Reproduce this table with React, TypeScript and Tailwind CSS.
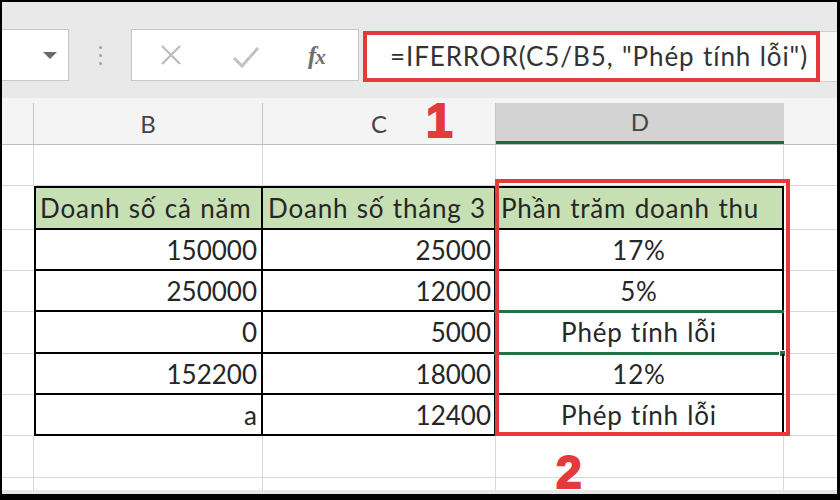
import React from "react";

const rows = [
  { b: "150000", c: "25000", d: "17%", h: "h-[41px]" },
  { b: "250000", c: "12000", d: "5%", h: "h-[41px]" },
  { b: "0", c: "5000", d: "Phép tính lỗi", h: "h-[42px]", selected: true },
  { b: "152200", c: "18000", d: "12%", h: "h-[41px]" },
  { b: "a", c: "12400", d: "Phép tính lỗi", h: "h-[41px]" },
];

function EmptyRow({ h, last }: { h: string; last?: boolean }) {
  const line = last ? "" : "border-b border-[#d9d9d9]";
  return (
    <div className={`flex ${h} shrink-0`}>
      <div className={`w-[32px] border-r border-[#d9d9d9] ${line}`} />
      <div className={`w-[229px] border-r border-[#d9d9d9] ${line}`} />
      <div className={`w-[233px] border-r border-[#d9d9d9] ${line}`} />
      <div className={`w-[288px] border-r border-[#d9d9d9] ${line}`} />
      <div className={`flex-1 ${line}`} />
    </div>
  );
}

export default function App() {
  return (
    <div className="w-[840px] h-[500px] bg-black border-l-2 border-t-2 border-r-[3px] border-b-[6px] border-black font-['Lato','Noto_Sans',sans-serif] text-[#262626]">
      <div className="relative w-full h-full bg-white flex flex-col">
        {/* formula bar */}
        <div className="h-[96px] shrink-0 bg-[#e9e9e9] flex items-start pt-[27px]">
          <div className="w-[67px] h-[52px] bg-white border border-l-0 border-[#c8c8c8] flex items-center justify-end pr-[11px]">
            <div className="w-0 h-0 border-l-[7px] border-r-[7px] border-t-[7px] border-l-transparent border-r-transparent border-t-[#6b6b6b]" />
          </div>
          <div className="ml-[29px] w-[4px] h-[52px] flex flex-col items-center justify-center gap-[5px]">
            <span className="w-[3px] h-[3px] rounded-full bg-[#a3a3a3]" />
            <span className="w-[3px] h-[3px] rounded-full bg-[#a3a3a3]" />
            <span className="w-[3px] h-[3px] rounded-full bg-[#a3a3a3]" />
          </div>
          <div className="ml-[29px] w-[228px] h-[52px] bg-white border border-[#c8c8c8] flex items-center">
            <svg className="ml-[28px]" width="22" height="22" viewBox="0 0 22 22">
              <path d="M2 2 L20 20 M20 2 L2 20" stroke="#b9b9b9" strokeWidth="2" fill="none" />
            </svg>
            <svg className="ml-[50px] mt-[3px]" width="28" height="24" viewBox="0 0 28 24">
              <path d="M2 13 L10 21 L26 3" stroke="#c2c2c2" strokeWidth="3" fill="none" />
            </svg>
            <span className="ml-[48px] font-['Liberation_Serif',serif] italic font-bold text-[25px] text-[#6e6e6e] leading-none tracking-[-1px]">
              f<span className="text-[21px]">x</span>
            </span>
          </div>
          <div className="ml-[4px] mt-[2px] w-[457px] h-[51px] bg-white border-4 border-[#e53a3d] flex items-center pl-[23px] text-[26px] text-[#333] whitespace-nowrap tracking-[0.9px] [word-spacing:1px]">
            =IFERROR(C5/B5, "Phép tính lỗi")
          </div>
          <div className="flex-1 mt-[2px] h-[51px] bg-[#f7f7f7] border-y border-[#d0d0d0]" />
        </div>

        {/* column headers */}
        <div className="h-[47px] shrink-0 bg-[#f4f4f4] pt-[5px] flex border-b border-[#bdbdbd] text-[24px] text-[#444]">
          <div className="w-[32px] border-r border-[#c4c4c4]" />
          <div className="w-[229px] border-r border-[#c4c4c4] flex items-center justify-center">B</div>
          <div className="w-[233px] border-r border-[#c4c4c4] flex items-center justify-center">C</div>
          <div className="w-[288px] bg-[#d3d3d3] border-b-[3px] border-[#1e6b41] flex items-center justify-center text-[#3b4a40]">D</div>
          <div className="flex-1" />
        </div>

        {/* sheet */}
        <div className="flex flex-col text-[26px]">
          <EmptyRow h="h-[41px]" />

          <div className="flex h-[44px] shrink-0 tracking-[0.8px] [word-spacing:1px]">
            <div className="w-[32px] border-b border-[#d9d9d9]" />
            <div className="w-[229px] bg-[#c6e0b4] border-2 border-black flex items-center pl-[4px] pt-[1px] whitespace-nowrap">Doanh số cả năm</div>
            <div className="w-[233px] bg-[#c6e0b4] border-y-2 border-r-2 border-black flex items-center pl-[5px] pt-[1px] whitespace-nowrap">Doanh số tháng 3</div>
            <div className="w-[288px] bg-[#c6e0b4] border-y-2 border-r-2 border-black flex items-center pl-[5px] pt-[1px] whitespace-nowrap">Phần trăm doanh thu</div>
            <div className="flex-1 border-b border-[#d9d9d9]" />
          </div>

          {rows.map((r, i) => (
            <div key={i} className={`flex ${r.h} shrink-0`}>
              <div className="w-[32px] border-b border-[#d9d9d9]" />
              <div className="w-[229px] border-x-2 border-b-2 border-black flex items-center justify-end pr-[4px] pt-[1px]">{r.b}</div>
              <div className="w-[233px] border-r-2 border-b-2 border-black flex items-center justify-end pr-[3px] pt-[1px]">{r.c}</div>
              <div className="relative w-[288px] border-r-2 border-b-2 border-black flex items-center justify-center pt-[1px] whitespace-nowrap tracking-[0.8px] [word-spacing:1px]">
                {r.d}
                {r.selected && (
                  <div className="absolute -left-[2px] -right-[2px] -top-[2px] -bottom-[3px] border-y-[3px] border-[#217346]">
                    <div className="absolute -right-[2px] -bottom-[5px] w-[7px] h-[7px] bg-[#217346] border border-white" />
                  </div>
                )}
              </div>
              <div className="flex-1 border-b border-[#d9d9d9]" />
            </div>
          ))}

          <EmptyRow h="h-[42px]" />
          <EmptyRow h="h-[12px]" last />
        </div>
        <div className="flex-1 bg-[#e6e6e6]" />

        {/* annotations */}
        <div className="absolute left-[493px] top-[177px] w-[295px] h-[257px] border-4 border-[#e53a3d]" />
        <div className="absolute left-[424px] top-[100px] font-['Liberation_Sans',Arial,sans-serif] font-bold text-[48px] leading-[38px] text-[#e53a3d] [-webkit-text-stroke:2px_#e53a3d]">1</div>
        <div className="absolute left-[554px] top-[451px] font-['Liberation_Sans',Arial,sans-serif] font-bold text-[46px] leading-[38px] text-[#e53a3d] [-webkit-text-stroke:2px_#e53a3d]">2</div>
      </div>
    </div>
  );
}
